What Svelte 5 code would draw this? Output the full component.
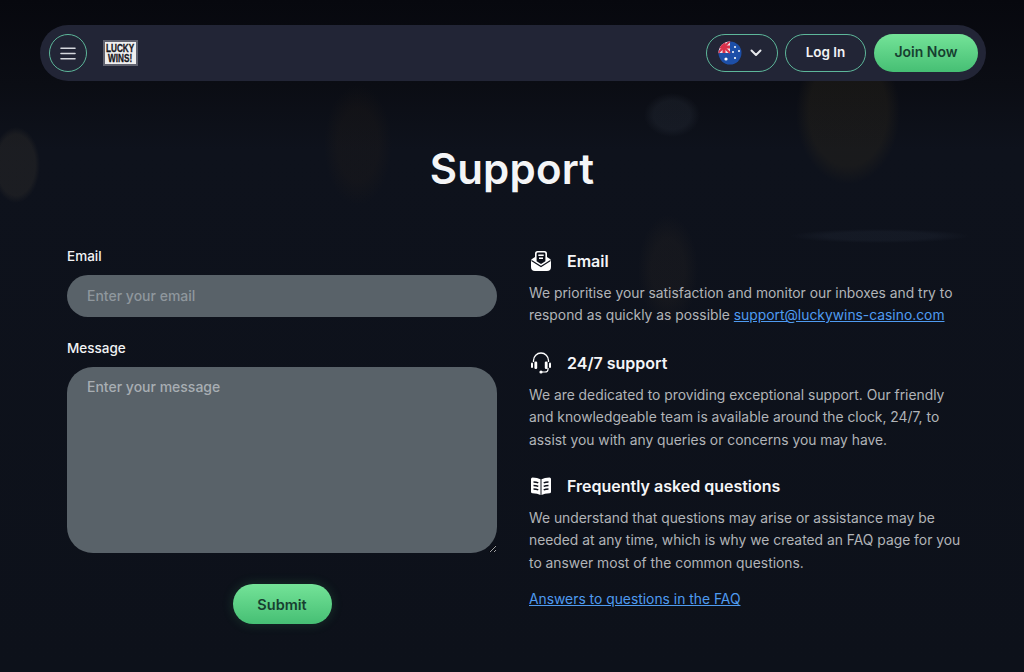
<script>
  const sections = [
    { icon: 'mail', title: 'Email' },
    { icon: 'headset', title: '24/7 support' },
    { icon: 'book', title: 'Frequently asked questions' }
  ];
</script>

<div class="page">
  <header class="topbar">
    <button class="burger" aria-label="Menu">
      <svg width="16" height="13" viewBox="0 0 16 13" fill="none" stroke="#d5d8de" stroke-width="1.6" stroke-linecap="round">
        <path d="M1 1.2h14M1 6.5h14M1 11.8h14" />
      </svg>
    </button>
    <div class="logo"><span>LUCKY<br />WINS!</span></div>
    <div class="spacer"></div>
    <button class="lang" aria-label="Language">
      <svg class="flag" width="24" height="24" viewBox="0 0 24 24">
        <defs><clipPath id="fc"><circle cx="12" cy="12" r="11.5" /></clipPath></defs>
        <g clip-path="url(#fc)">
          <rect width="24" height="24" fill="#1d4fa8" />
          <rect width="12" height="12" fill="#e9e4ea" />
          <path d="M0 0l12 12M12 0L0 12" stroke="#d8304a" stroke-width="2" />
          <path d="M6 0v12M0 6h12" stroke="#d8304a" stroke-width="3" />
          <g fill="#fff">
            <circle cx="8" cy="18" r="1.6" />
            <circle cx="17" cy="6" r="1" />
            <circle cx="21" cy="10" r="1" />
            <circle cx="17" cy="17" r="1.1" />
            <circle cx="15" cy="11" r="1" />
          </g>
        </g>
      </svg>
      <svg width="12" height="8" viewBox="0 0 12 8" fill="none" stroke="#e6e8ec" stroke-width="2" stroke-linecap="round" stroke-linejoin="round">
        <path d="M1.500 1.500L6 6l4.500-4.500" />
      </svg>
    </button>
    <button class="login">Log In</button>
    <button class="cta join">Join Now</button>
  </header>

  <h1>Support</h1>

  <main class="columns">
    <form class="form" onsubmit={(e) => e.preventDefault()}>
      <label for="email">Email</label>
      <input id="email" type="text" placeholder="Enter your email" />
      <label for="message" class="second">Message</label>
      <textarea id="message" placeholder="Enter your message"></textarea>
      <button class="cta submit" type="submit">Submit</button>
    </form>

    <div class="info">
      {#each sections as s, i}
        <section class="block b{i}">
          <h2>
            <span class="ico">
              {#if s.icon === 'mail'}
                <svg width="20" height="20" viewBox="0 0 20 20">
                  <path fill="#fff" d="M4 2.500Q4 0 6.500 0h7Q16 0 16 2.500V6l3 2q1 .7 1 2v6q0 4-4 4H4q-4 0-4-4v-6q0-1.300 1-2l3-2Z" />
                  <path fill="#0c0f18" d="M5.600 3Q5.600 1.600 7 1.600h6q1.400 0 1.400 1.400v7.200L10 13 5.600 10.200Z" />
                  <path fill="#fff" d="M7.300 3.500h5.400v1.500H7.300ZM8 6.500h4V8H8Z" />
                  <path fill="none" stroke="#0c0f18" stroke-width="1.100" d="M.5 9.500l9.500 6 9.500-6" />
                </svg>
              {:else if s.icon === 'headset'}
                <svg width="22" height="22" viewBox="0 0 22 22" fill="none">
                  <path d="M3.500 10V8.500a7.500 7.500 0 0 1 15 0V10" stroke="#fff" stroke-width="1.300" />
                  <path d="M18 16v1.500q0 2.500-3 2.500h-3" stroke="#fff" stroke-width="1.200" />
                  <rect x="4.400" y="9.500" width="2.800" height="7.500" rx="1.200" fill="#fff" />
                  <rect x="14.800" y="9.500" width="2.800" height="7.500" rx="1.200" fill="#fff" />
                  <rect x="1" y="10.500" width="2" height="5.500" rx="1" fill="#fff" />
                  <rect x="19" y="10.500" width="2" height="5.500" rx="1" fill="#fff" />
                  <circle cx="11" cy="20" r="1.600" fill="#fff" />
                </svg>
              {:else}
                <svg width="20" height="18" viewBox="0 0 20 18">
                  <path fill="#fff" d="M0 2Q0 .5 1.500 .5q5 0 8 1.800V18q-3-1.800-8-1.800-1.500 0-1.500-1.500ZM20 2q0-1.500-1.500-1.500-5 0-8 1.800V18q3-1.800 8-1.800 1.500 0 1.500-1.500Z" />
                  <path fill="none" stroke="#0c0f18" stroke-width="1.500" d="M2.500 5q2.800 0 4.800 .9M2.500 8.500q2.800 0 4.800 .9M2.500 12q2.800 0 4.800 .9M17.500 5q-2.800 0-4.800 .9M17.500 8.500q-2.800 0-4.800 .9M17.500 12q-2.800 0-4.800 .9" />
                </svg>
              {/if}
            </span>
            {s.title}
          </h2>
          {#if i === 0}
            <p>We prioritise your satisfaction and monitor our inboxes and try to respond as quickly as possible <a href="#top">support@luckywins-casino.com</a></p>
          {:else if i === 1}
            <p>We are dedicated to providing exceptional support. Our friendly and knowledgeable team is available around the clock, 24/7, to assist you with any queries or concerns you may have.</p>
          {:else}
            <p>We understand that questions may arise or assistance may be needed at any time, which is why we created an FAQ page for you to answer most of the common questions.</p>
          {/if}
        </section>
      {/each}
      <a class="faq" href="#top">Answers to questions in the FAQ</a>
    </div>
  </main>
</div>

<style>
  :global(body) {
    margin: 0;
    background: #0d111a;
    font-family: Inter, "Liberation Sans", sans-serif;
  }

  .page {
    height: 672px;
    overflow: hidden;
    box-sizing: border-box;
    padding-top: 25px;
    /* blurred artwork behind the page, very faint */
    background:
      radial-gradient(ellipse 52px 72px at 848px 112px, rgba(70, 58, 28, 0.2) 75%, transparent),
      radial-gradient(ellipse 34px 60px at 358px 145px, rgba(50, 38, 24, 0.16) 60%, transparent),
      radial-gradient(ellipse 24px 38px at 16px 165px, rgba(70, 64, 52, 0.24) 80%, transparent),
      radial-gradient(ellipse 30px 55px at 668px 270px, rgba(56, 48, 38, 0.18) 55%, transparent),
      radial-gradient(ellipse 28px 22px at 672px 115px, rgba(70, 80, 95, 0.16) 65%, transparent),
      radial-gradient(ellipse 90px 7px at 880px 236px, rgba(60, 72, 92, 0.14) 60%, transparent),
      linear-gradient(#07080e, #0b0d14 85px, #0e121c 150px, #0d111a);
  }

  /* top bar */
  .topbar {
    display: flex;
    align-items: center;
    height: 56px;
    margin: 0 38px 0 40px;
    padding: 0 8px 0 9px;
    box-sizing: border-box;
    background: #222536;
    border-radius: 28px;
  }

  button {
    font-family: inherit;
    cursor: pointer;
  }

  .burger {
    display: flex;
    align-items: center;
    justify-content: center;
    width: 38px;
    height: 38px;
    padding: 0;
    background: none;
    border: 1px solid #5db79a;
    border-radius: 50%;
  }

  .logo {
    display: flex;
    align-items: center;
    justify-content: center;
    width: 35px;
    height: 26px;
    margin-left: 16px;
    box-sizing: border-box;
    overflow: hidden;
    background: #eeeeee;
    border: 2px solid #60626f;
  }

  .logo span {
    font: 700 10.5px/10px "Liberation Sans", sans-serif;
    color: #17171d;
    text-align: center;
    white-space: nowrap;
    transform: scaleX(0.78);
    -webkit-text-stroke: 0.3px #17171d;
  }

  .spacer { flex: 1; }

  .lang {
    display: flex;
    align-items: center;
    gap: 8px;
    width: 72px;
    height: 38px;
    padding: 0 0 0 11px;
    background: none;
    border: 1px solid #5db79a;
    border-radius: 19px;
    box-sizing: border-box;
  }

  .login {
    width: 81px;
    height: 38px;
    margin-left: 7px;
    padding: 0 0 2px;
    background: none;
    border: 1px solid #5db79a;
    border-radius: 19px;
    color: #f2f3f5;
    font-size: 13.5px;
    font-weight: 600;
  }

  .cta {
    background: linear-gradient(#74e398, #46bf74);
    border: none;
    color: #173f30;
    font-weight: 600;
    padding: 0;
  }

  .join {
    width: 104px;
    height: 38px;
    margin-left: 8px;
    padding-bottom: 3px;
    border-radius: 19px;
    font-size: 14px;
  }

  h1 {
    margin: 63px 0 0;
    text-align: center;
    color: #f4f5f7;
    font-size: 42px;
    line-height: 50px;
    font-weight: 600;
    letter-spacing: 0.2px;
  }

  /* two columns */
  .columns {
    display: grid;
    grid-template-columns: 430px 436px;
    column-gap: 32px;
    margin: 53px 0 0 67px;
  }

  .form {
    display: flex;
    flex-direction: column;
  }

  label {
    color: #f2f3f5;
    font-size: 13.5px;
    line-height: 18px;
    font-weight: 500;
  }

  label.second { margin-top: 22px; }

  input, textarea {
    width: 100%;
    box-sizing: border-box;
    background: #596269;
    border: none;
    outline: none;
    color: #fff;
    font-family: inherit;
    font-size: 14px;
    font-weight: 500;
  }

  input::placeholder { color: #8f979d; opacity: 1; }
  textarea::placeholder { color: #a8aeb3; opacity: 1; }

  input {
    height: 42px;
    margin-top: 10px;
    padding: 0 20px 2px;
    border-radius: 21px;
  }

  textarea {
    display: block;
    height: 186px;
    margin-top: 10px;
    padding: 12px 20px;
    border-radius: 26px;
    line-height: 16px;
  }

  .submit {
    align-self: center;
    width: 99px;
    height: 40px;
    margin-top: 31px;
    border-radius: 20px;
    font-size: 14.5px;
    box-shadow: 0 0 12px rgba(70, 190, 115, 0.2);
  }

  .info {
    display: flex;
    flex-direction: column;
    padding-top: 2px;
  }

  .block { margin-bottom: 24px; }
  .b1 { margin-bottom: 23px; }
  .b2 { margin-bottom: 14px; }

  h2 {
    display: flex;
    align-items: center;
    gap: 15px;
    height: 24px;
    margin: 0 0 9px;
    color: #f4f5f7;
    font-size: 16px;
    font-weight: 600;
  }

  .ico {
    display: flex;
    justify-content: center;
    width: 22px;
    margin-left: 1px;
  }

  p {
    margin: 0;
    color: #b1b4b8;
    font-size: 13.85px;
    line-height: 22.4px;
  }

  a {
    color: #4f9bf0;
    text-decoration: underline;
  }

  .faq {
    font-size: 13.85px;
    line-height: 22px;
  }
</style>
